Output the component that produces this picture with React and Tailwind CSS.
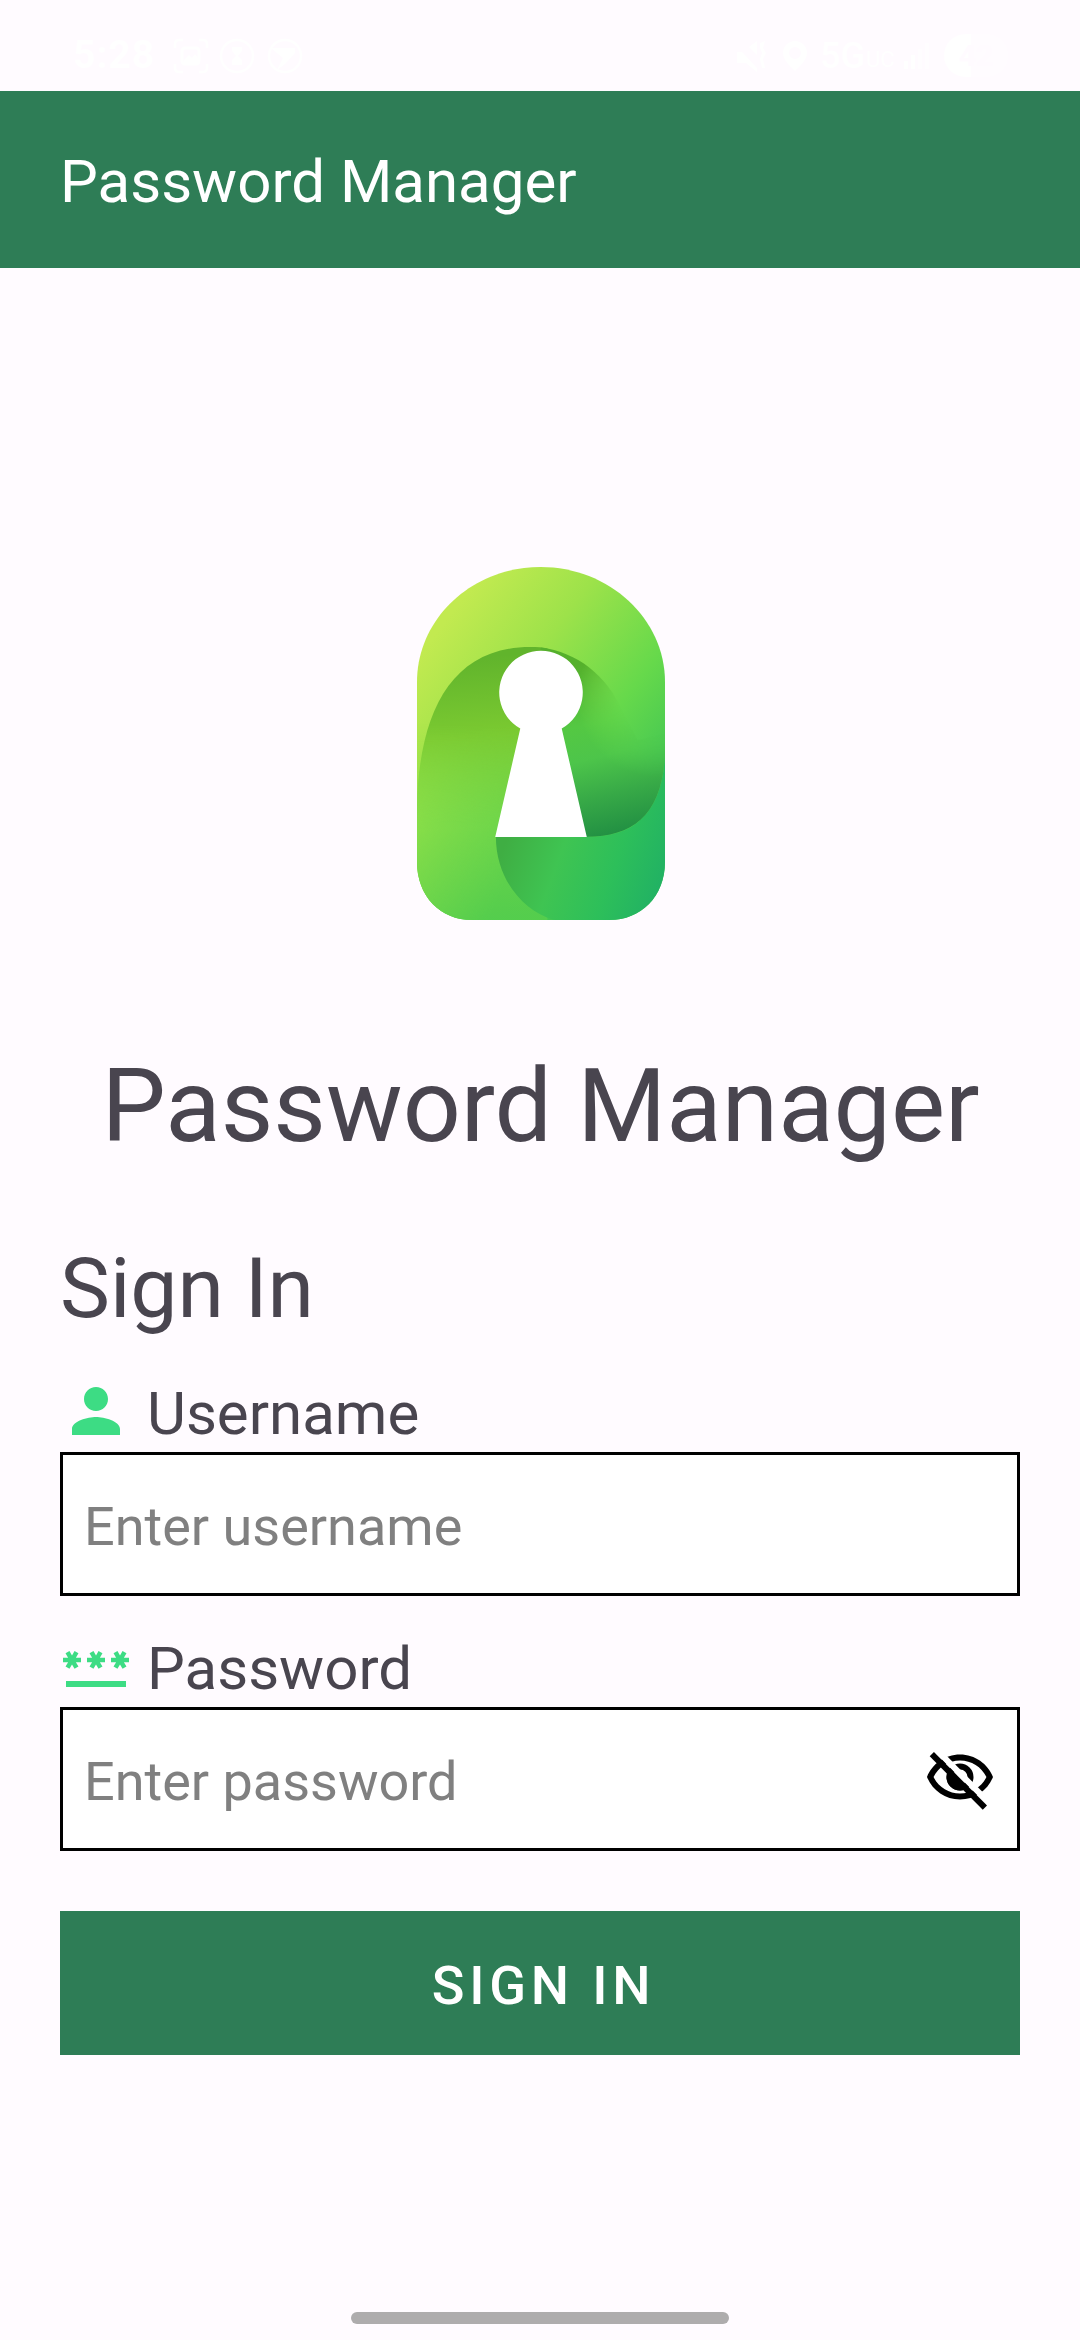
import { MdPerson, MdPassword } from "react-icons/md";

function Logo() {
  return (
    <svg className="block h-[353px] w-[248px]" viewBox="80 80 742 1060" preserveAspectRatio="none">
      <defs>
        <clipPath id="body">
          <path d="M80 425C80 235 245 80 450 80S822 235 822 425V965C822 1070 750 1140 655 1140H245C150 1140 80 1070 80 965Z" />
        </clipPath>
        <linearGradient id="band" gradientUnits="userSpaceOnUse" x1="150" y1="260" x2="780" y2="740">
          <stop offset="0" stopColor="#c2ea50" />
          <stop offset=".35" stopColor="#9de24a" />
          <stop offset=".72" stopColor="#66d94b" />
          <stop offset="1" stopColor="#43c653" />
        </linearGradient>
        <linearGradient id="left" gradientUnits="userSpaceOnUse" x1="270" y1="350" x2="330" y2="1130">
          <stop offset="0" stopColor="#61b42c" />
          <stop offset=".3" stopColor="#7bca31" />
          <stop offset=".65" stopColor="#80dc49" />
          <stop offset="1" stopColor="#55ce4e" />
        </linearGradient>
        <linearGradient id="leftEdge" gradientUnits="userSpaceOnUse" x1="80" y1="700" x2="420" y2="850">
          <stop offset="0" stopColor="#93e148" stopOpacity=".8" />
          <stop offset="1" stopColor="#55cd4c" stopOpacity=".5" />
        </linearGradient>
        <linearGradient id="edgeFade" gradientUnits="userSpaceOnUse" x1="0" y1="550" x2="0" y2="850">
          <stop offset="0" stopColor="#000" />
          <stop offset="1" stopColor="#fff" />
        </linearGradient>
        <mask id="edgeMask" maskUnits="userSpaceOnUse" x="80" y="80" width="742" height="1060">
          <rect x="80" y="80" width="742" height="1060" fill="url(#edgeFade)" />
        </mask>
        <linearGradient id="bottom" gradientUnits="userSpaceOnUse" x1="340" y1="920" x2="790" y2="1080">
          <stop offset="0" stopColor="#3fae43" />
          <stop offset=".35" stopColor="#3fc452" />
          <stop offset=".7" stopColor="#2dbf5a" />
          <stop offset="1" stopColor="#22b263" />
        </linearGradient>
        <linearGradient id="innerRight" gradientUnits="userSpaceOnUse" x1="580" y1="370" x2="700" y2="870">
          <stop offset="0" stopColor="#55b02c" />
          <stop offset=".35" stopColor="#54c843" />
          <stop offset=".55" stopColor="#4dc54a" />
          <stop offset=".78" stopColor="#37a947" />
          <stop offset="1" stopColor="#239143" />
        </linearGradient>
        <radialGradient id="turnFade" gradientUnits="userSpaceOnUse" cx="800" cy="470" r="240">
          <stop offset=".46" stopColor="#000" />
          <stop offset="1" stopColor="#fff" />
        </radialGradient>
        <mask id="turnMask" maskUnits="userSpaceOnUse" x="80" y="80" width="742" height="1060">
          <rect x="80" y="80" width="742" height="1060" fill="url(#turnFade)" />
        </mask>
      </defs>
      <g clipPath="url(#body)">
        <rect x="80" y="80" width="742" height="1060" fill="url(#band)" />
        <path d="M80 800C85 520 180 320 420 320C440 320 455 321 470 324V1140H80Z" fill="url(#left)" />
        <rect x="80" y="500" width="380" height="640" fill="url(#leftEdge)" mask="url(#edgeMask)" />
        <path d="M316 890H590C730 890 800 830 815 660L822 600V1140H490C390 1110 316 1010 316 890Z" fill="url(#bottom)" />
        <path d="M588 890C730 890 815 820 822 640V500H690V600H500V890Z" fill="#4cca4f" mask="url(#turnMask)" />
        <path d="M822 500V640C815 820 730 890 588 890V500Z" fill="url(#band)" />
        <path
          d="M450 322C560 335 650 410 690 505L740 600L822 580V640C815 820 730 890 588 890H450Z"
          fill="url(#innerRight)"
          mask="url(#turnMask)"
        />
      </g>
      <path d="M389 565A125 125 0 1 1 513 565L588 891H314Z" fill="#fff" />
    </svg>
  );
}

function EyeOff() {
  return (
    <svg className="block size-[72px] mb-[4px]" viewBox="0 0 24 24">
      <defs>
        <clipPath id="belowSlash">
          <path d="M0 1.6L24 25.9H0Z" />
        </clipPath>
      </defs>
      <path
        fillRule="evenodd"
        d="M12 4.5C7 4.5 2.73 7.61 1 12c1.73 4.39 6 7.5 11 7.5s9.27-3.11 11-7.5c-1.73-4.39-6-7.5-11-7.5zM12 6.5c3.79 0 7.17 2.13 8.82 5.5-1.65 3.37-5.03 5.5-8.82 5.5S4.83 15.37 3.18 12C4.83 8.63 8.21 6.5 12 6.5z"
      />
      <circle cx="12" cy="12" r="3.5" fill="none" stroke="#000" strokeWidth="2" />
      <circle cx="12" cy="12" r="4.5" clipPath="url(#belowSlash)" />
      <path d="M4.6 3.4L21.9 20.8" stroke="#fff" strokeWidth="2" />
      <path d="M2.6 4.4L20.3 22.2" stroke="#000" strokeWidth="2" />
    </svg>
  );
}

function StatusBar() {
  return (
    <div className="flex h-[91px] items-center justify-between pt-[20px] pr-[72px] pl-[73px] text-white">
      <div className="flex items-center">
        <span className="w-[100px] text-[39px] leading-none font-bold tracking-[1px]">5:28</span>
        <svg className="h-[36px] w-[130px]" viewBox="0 0 130 36" fill="none" stroke="#fff" strokeWidth="2.5">
          <path d="M2 10V6Q2 2 6 2H10M26 2H30Q34 2 34 6V10M34 26V30Q34 34 30 34H26M10 34H6Q2 34 2 30V26" />
          <rect x="9" y="10" width="17" height="16" rx="3" strokeWidth="3" />
          <path d="M11 22L16 17L19 20L22 16L25 20V25H11Z" fill="#fff" stroke="none" />
          <circle cx="64" cy="18" r="16" />
          <path d="M59 9H69V13L65 18L69 22V27H59V22L63 18L59 13Z" fill="#fff" stroke="none" />
          <circle cx="112" cy="18" r="16" />
          <path d="M98 10H122V15L112 26L104 32L110 20Z" fill="#fff" stroke="none" />
        </svg>
      </div>
      <div className="flex items-center">
        <svg className="h-[32px] w-[70px]" viewBox="0 0 70 32" fill="#fff">
          <path d="M0 12H5L20 28V32L9 23H0ZM12 7L20 1V15ZM23 3L28 1L26 8L29 13L26 19L28 28H25L23 19L25 13L23 8Z" />
          <path
            fillRule="evenodd"
            d="M58 1A12 12 0 0 1 70 13C70 20 62 27 58 31C54 27 46 20 46 13A12 12 0 0 1 58 1ZM58 7A6 6 0 1 0 58 19A6 6 0 1 0 58 7Z"
          />
        </svg>
        <span className="ml-[13px] w-[46px] text-[36px] leading-none font-medium">5G</span>
        <span className="mt-[8px] w-[38px] text-[22px] leading-none">UC</span>
        <svg className="h-[26px] w-[26px]" viewBox="0 0 26 26" fill="#fff">
          <path d="M0 18H4V26H0ZM7 12H11V26H7Z" />
          <path d="M14 6H18V26H14ZM21 0H25V26H21Z" opacity=".5" />
        </svg>
        <span className="ml-[14px] flex h-[43px] w-[64px] items-center justify-center rounded-full bg-linear-to-r from-white from-42% to-white/30 to-42% text-[30px] leading-none font-bold text-[#fffbff]">
          42
        </span>
      </div>
    </div>
  );
}

export default function App() {
  return (
    <div className="flex h-[2340px] w-[1080px] flex-col overflow-hidden bg-[#fffbff] font-[Roboto,sans-serif] text-[#49454f]">
      <StatusBar />
      <header className="flex h-[177px] items-center bg-[#2e7d56] pl-[60px] text-[60px] leading-[70px] text-white">
        <h1 className="mt-[5px]">Password Manager</h1>
      </header>
      <main className="flex flex-col px-[60px]">
        <div className="mt-[299px] flex justify-center pl-px">
          <Logo />
        </div>
        <h2 className="mt-[126px] pl-px text-center text-[102px] leading-[120px] whitespace-nowrap">Password Manager</h2>
        <h3 className="mt-[74px] text-[84px] leading-[98px]">Sign In</h3>
        <div className="mt-[37px] flex h-[77px] items-start">
          <MdPerson className="size-[72px] text-[#3ddc84]" />
          <label className="mt-[4px] ml-[15px] text-[60px] leading-[70px]">Username</label>
        </div>
        <input
          className="h-[144px] border-[3px] border-black bg-white pt-[4px] pl-[21px] text-[54px] text-black placeholder:text-[#808080]"
          placeholder="Enter username"
        />
        <div className="mt-[34px] flex h-[77px] items-start">
          <MdPassword className="size-[72px] text-[#3ddc84]" />
          <label className="mt-[4px] ml-[15px] text-[60px] leading-[70px]">Password</label>
        </div>
        <div className="flex h-[144px] items-center border-[3px] border-black bg-white pr-[21px] pl-[21px]">
          <input
            type="password"
            className="min-w-0 flex-1 pt-[4px] text-[54px] text-black placeholder:text-[#808080]"
            placeholder="Enter password"
          />
          <EyeOff />
        </div>
        <button className="mt-[60px] h-[144px] bg-[#2e7d56] pt-[4px] pl-[7px] text-[54px] font-medium tracking-[4.8px] text-white">
          SIGN IN
        </button>
      </main>
      <div className="mt-auto mb-[16px] h-[12px] w-[378px] self-center rounded-full bg-[#aeacad]" />
    </div>
  );
}
